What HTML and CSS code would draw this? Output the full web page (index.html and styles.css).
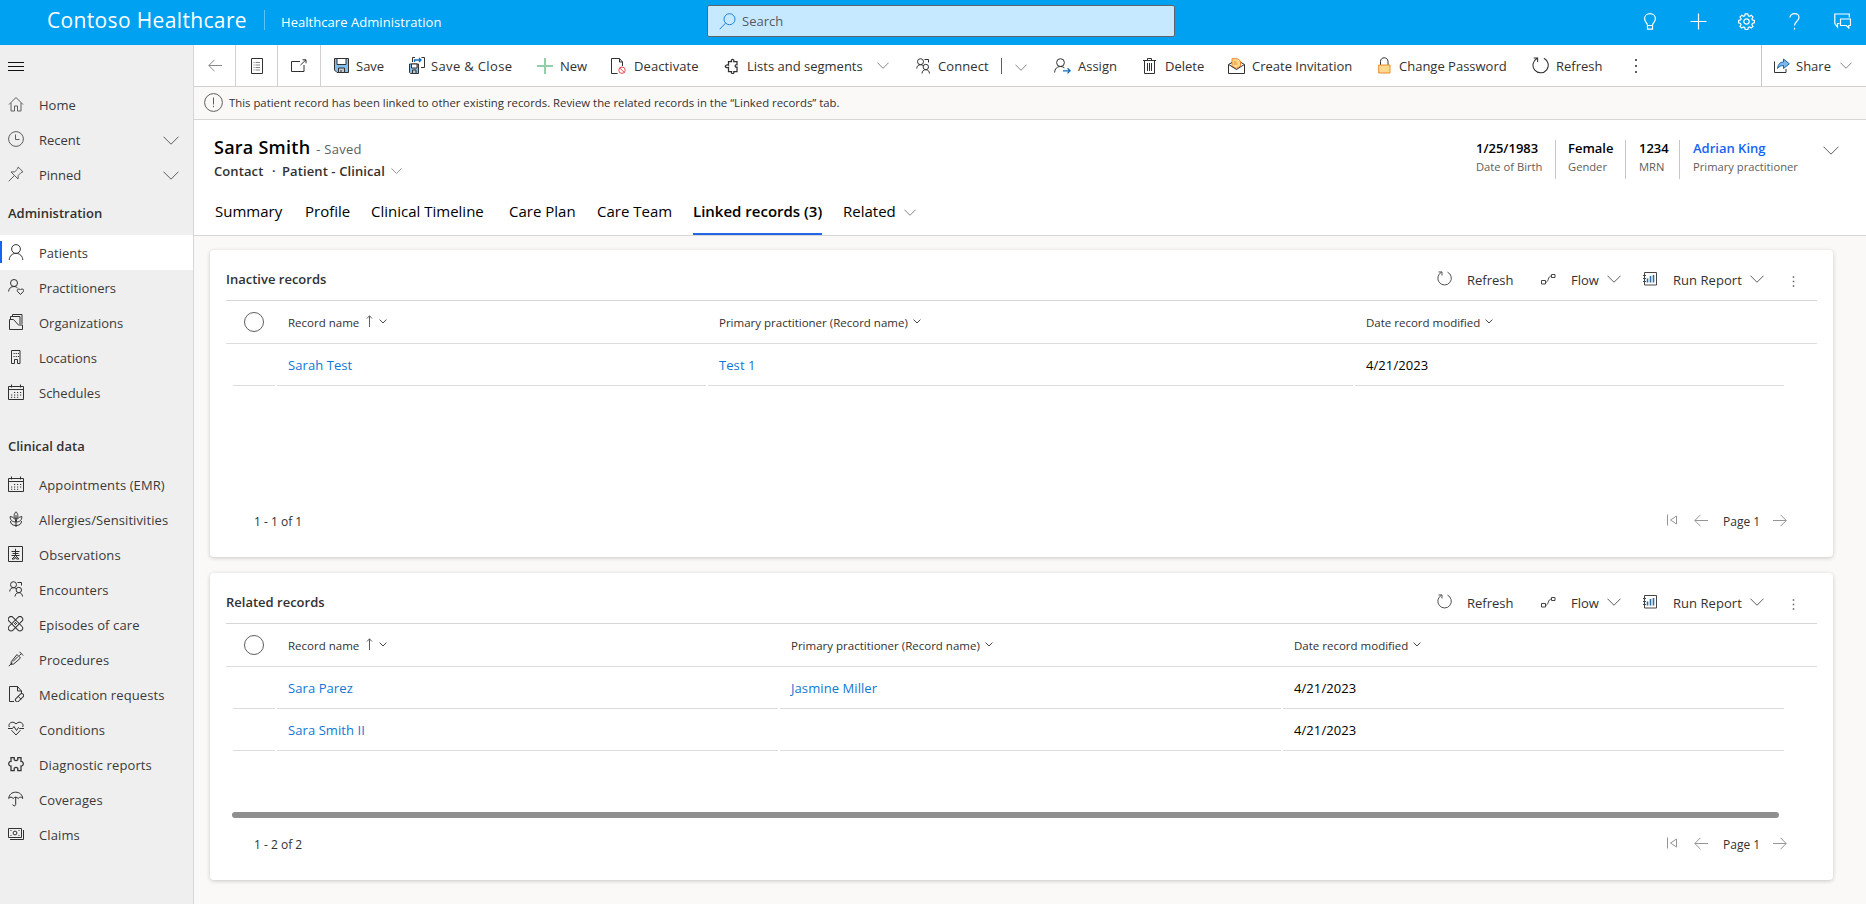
FILE: index.html
```
<!DOCTYPE html>
<html lang="en">
<head>
<meta charset="utf-8">
<title>Sara Smith - Contoso Healthcare</title>
<link rel="stylesheet" href="styles.css">
</head>
<body>
<svg class="sprite" aria-hidden="true">
  <symbol id="chev" viewBox="0 0 16 9"><path d="M.5.7 8 8.2 15.5.7"/></symbol>
  <symbol id="chev-s" viewBox="0 0 8 5"><path d="M.6.6 4 4 7.4.6"/></symbol>
  <symbol id="refresh" viewBox="0 0 16 16"><path d="M11.2 1.2a7.2 7.2 0 1 1-6.6.2M1.6 1h3.7v3.8"/></symbol>
  <symbol id="person" viewBox="0 0 16 16"><circle cx="8" cy="5" r="4.4"/><path d="M1.2 16c.2-4 3-6.600 6.800-6.600s6.600 2.600 6.800 6.600"/></symbol>
  <symbol id="people" viewBox="0 0 14 16"><circle cx="4.500" cy="3.700" r="3"/><path d="M.7 10.500c.2-2.400 1.600-3.800 3.800-3.800 1 0 1.800.3 2.400.8M8.500 1.500h4v3"/><circle cx="9.800" cy="9" r="2.700"/><path d="M6 15.500c.2-2.400 1.600-3.800 3.800-3.800s3.500 1.400 3.700 3.800"/></symbol>
  <symbol id="calendar" viewBox="0 0 16 16"><path d="M.5 2.500h15v13H.5zM.5 5.500h15M3.500.5v3M12.500.5v3"/><path d="M6 8.500h7.500M3 11h10.500M3 13.300h8" stroke-dasharray="1.200 1.800"/></symbol>
  <symbol id="puzzle" viewBox="0 0 14 16"><path d="M4.500 3.500h3c-1-2.800 3-2.800 2.300 0h3.200v3.200c-2.500-.6-2.500 3 0 2.400v4.400H9.800c.7 2.800-3 2.800-2.300 0h-3V9.300c-4 1.500-4.500-3.200 0-2.200z"/></symbol>
  <symbol id="dots" viewBox="0 0 4 16"><path d="M1 1h2v2H1zM1 7h2v2H1zM1 13h2v2H1z"/></symbol>
  <symbol id="flow" viewBox="0 0 15 12"><path d="M.5 7.500h4v3.500h-4zM10.500 1.500h3.500v3h-3.500zM4.500 9.300C8 9.300 6.500 3 10.500 3"/></symbol>
  <symbol id="report" viewBox="0 0 14 14"><path d="M1.500.5h12v12.500h-12z"/><path class="bar" d="M4.500 6.500v4M7.500 4v6.500M10.500 3v7.500"/><path d="M0 3.500h3M0 6.500h3M0 9.500h3"/></symbol>
  <symbol id="first" viewBox="0 0 11 12"><path d="M.5.500v11M9.500 2v8L3.500 6z"/></symbol>
  <symbol id="left" viewBox="0 0 14 13"><path d="M.8 6.500H14M6.500.8.8 6.500l5.700 5.700"/></symbol>
  <symbol id="right" viewBox="0 0 14 13"><path d="M0 6.500h13.200M7.500.8l5.700 5.700-5.700 5.700"/></symbol>
  <symbol id="up" viewBox="0 0 8 12"><path d="M3.500.8V12M1 3.500l2.500-2.700L6 3.500"/></symbol>
</svg>

<header class="topbar">
  <div class="brand">Contoso Healthcare</div>
  <div class="app-name">Healthcare Administration</div>
  <div class="search">
    <svg class="ic" width="17" height="17" viewBox="0 0 17 17"><circle cx="10.500" cy="6.200" r="5.500"/><path d="M6.500 10.200.7 16.200"/></svg>
    <span>Search</span>
  </div>
  <nav class="top-icons">
    <svg class="ic" width="12" height="17" viewBox="0 0 12 17"><path d="M3.500 12.500C3.500 9.500.6 9 .6 5.700.600 2.800 3 .7 6 .7s5.400 2.100 5.400 5c0 3.300-2.900 3.800-2.900 6.800zM3.500 12.500v3.700h5v-3.700"/></svg>
    <svg class="ic plus" width="17" height="17" viewBox="0 0 17 17"><path d="M8.500.5v16M.5 8.500h16"/></svg>
    <svg class="ic" width="17" height="17" viewBox="0 0 17 17"><circle cx="8.500" cy="8.500" r="2.700"/><path d="M7.200.8h2.600l.5 2 1.200.5 1.800-1.100 1.700 1.800-1.100 1.800.5 1.100 2 .500v2.500l-2 .500-.5 1.200 1.100 1.800-1.800 1.700-1.700-1.100-1.200.5-.500 2H7.200l-.5-2-1.200-.5-1.800 1.100L2 13.400l1.100-1.800-.5-1.200-2-.500V7.400l2-.500.5-1.100L2 4l1.800-1.800 1.700 1.100 1.200-.5z"/></svg>
    <svg class="ic" width="11" height="17" viewBox="0 0 11 17"><path d="M1 4.500C1 2 3 .7 5.400.7 8 .7 10 2.300 10 4.600c0 3.400-4.500 4-4.500 7.900M5.500 14.800v1.700"/></svg>
    <svg class="ic" width="17" height="16" viewBox="0 0 17 16"><path d="M5.500 10.500H3.500V14L.8 10.500V1h14.500v3.500M6.500 6h10v6.500h-1.700v2.500l-2.500-2.500H6.500z"/></svg>
  </nav>
</header>

<div class="shell">
  <aside class="side">
    <div class="burger"><i></i><i></i><i></i></div>
    <ul class="nav">
      <li><svg class="ic soft" viewBox="0 0 16 16"><path d="M1 8.500 8 1.500l7 7M3 7v8h3.500v-5h3v5H13V7"/></svg>Home</li>
      <li><svg class="ic soft" viewBox="0 0 16 16"><circle cx="8" cy="8" r="7.400"/><path d="M7.500 3.500v5h4"/></svg>Recent<svg class="ic more"><use href="#chev"/></svg></li>
      <li><svg class="ic soft" viewBox="0 0 16 16"><path d="M10.200 1 15 5.800l-2 .8-2.800 2.900-.2 3.500L3 6l3.700-.200L9.500 3zM6.500 9.500.7 15.300"/></svg>Pinned<svg class="ic more"><use href="#chev"/></svg></li>
    </ul>
    <h2 class="group">Administration</h2>
    <ul class="nav">
      <li class="on"><svg class="ic"><use href="#person"/></svg>Patients</li>
      <li><svg class="ic" viewBox="0 0 16 16"><circle cx="6" cy="4" r="3.500"/><path d="M.6 12.500c.2-3 2.200-5 5.400-5 1.600 0 2.600.5 3.600 1.500M12.500 15.500 9.400 12.300c-1-2 1.900-3.300 3.100-1.300 1.200-2 4-.7 3 1.300z"/></svg>Practitioners</li>
      <li><svg class="ic" viewBox="0 0 16 16"><path d="M2.500 5V2.500h9.500V10M4.500 2.500v-2h9.500V10M1.500 5.500h4l5 5.500h4v4.500h-13z"/></svg>Organizations</li>
      <li><svg class="ic" viewBox="0 0 16 16"><path d="M3.500 1.500h8.500v13H9.500v-4h-3v4h-3z"/><path d="M5.500 4.500H11M5.500 7.500H11" stroke-dasharray="1.200 1"/></svg>Locations</li>
      <li><svg class="ic"><use href="#calendar"/></svg>Schedules</li>
    </ul>
    <h2 class="group clinical">Clinical data</h2>
    <ul class="nav wide">
      <li><svg class="ic"><use href="#calendar"/></svg>Appointments (EMR)</li>
      <li><svg class="ic" viewBox="0 0 16 16"><path d="M8 .8c2.500 2.700 2.500 5 0 7.200C5.500 5.800 5.500 3.500 8 .8zM8 4v12M8 11C7.500 7.500 5 6 2.200 5.500 2 9 4 11 8 11c4 0 6-2 5.800-5.500C11 6 8.500 7.500 8 11M8 14.500C4.500 14.500 2.500 13 2.500 10M8 14.500c3.500 0 5.500-1.500 5.500-4.500"/></svg>Allergies/Sensitivities</li>
      <li><svg class="ic" viewBox="0 0 16 16"><path d="M.5.500h14v15H.5zM7.500 2.800v7M3.500 5.500h8M4.500 7.500h6M3.500 9.500h8M7.500 9.500 4 13h2.500l1-2 1 2H11z"/></svg>Observations</li>
      <li><svg class="ic"><use href="#people"/></svg>Encounters</li>
      <li><svg class="ic" viewBox="0 0 16 16"><rect x="-1.500" y="5" width="18" height="5.500" rx="2.700" transform="rotate(45 7.500 7.700)"/><rect x="-1.500" y="5" width="18" height="5.500" rx="2.700" transform="rotate(-45 7.500 7.700)"/><path d="M6 7.500h3.500M7.500 6v3.500" stroke-dasharray="1 1"/></svg>Episodes of care</li>
      <li><svg class="ic" viewBox="0 0 16 16"><path d="M.8 15.200l3.500-3.500M11.500.8l3.700 3.700M13.300 2.700l-2 2M9 3.500l3.500 3.500-6.800 6-2.700.3.300-2.700zM10 5.500l-5 5"/></svg>Procedures</li>
      <li><svg class="ic" viewBox="0 0 16 16"><path d="M6 15.500H1.500V.5h8l4 4.500v2M9.500.5V5h4"/><rect x="6.500" y="9.800" width="10" height="3.800" rx="1.900" transform="rotate(-45 11.500 11.700)"/><path d="m10 10.200 3 3"/></svg>Medication requests</li>
      <li><svg class="ic" viewBox="0 0 16 16"><path d="M1.300 6C-.5 2.500 4.500-1 8 3c3.500-4 8.500-.5 6.700 3M3.500 9.200 8 14l4.500-4.800M0 7.500h4.500L6 5.500l2.500 4 2-3 1 1H16"/></svg>Conditions</li>
      <li><svg class="ic bold" viewBox="0 0 16 16"><path d="M3 1.500h3.200v2.300c1.200 1 2.400 1 3.600 0V1.500H13v4c3-.5 3 5 0 4.500v4.500H9.800v-2.300c-1.200-1-2.400-1-3.600 0v2.300H3V10c-3 .5-3-5 0-4.500z"/></svg>Diagnostic reports</li>
      <li><svg class="ic" viewBox="0 0 16 16"><path d="M.7 7.500C1 3.500 4 1.200 7.700 1.200s6.700 2.300 7 6.300c-1.500-1.800-3-1.800-4.500 0-1.600-1.800-3.400-1.800-5 0-1.500-1.800-3-1.800-4.500 0zM7.700 6v7.500c0 1.800-2.900 1.800-2.900 0"/></svg>Coverages</li>
      <li><svg class="ic" viewBox="0 0 16 16"><path d="M.5 2.500h13v9H.5zM2 13.500h13.500V4"/><circle cx="7" cy="7" r="1.900"/><path d="M2.500 4.500h1M10.500 4.500h1M2.500 9.500h1M10.500 9.500h1"/></svg>Claims</li>
    </ul>
  </aside>

  <main class="main">
    <div class="commands">
      <div class="sq back"><svg class="ic" width="14" height="13"><use href="#left"/></svg></div>
      <div class="sq form"><svg class="ic" width="12" height="16" viewBox="0 0 12 16"><path d="M.5.5h11v15H.5z"/><path class="rule" d="M4.500 4.500H9M4.500 7H9M4.500 9.500H9M4.500 12H9M2.500 4.500h1M2.500 7h1M2.500 9.500h1M2.500 12h1"/></svg></div>
      <div class="sq pop"><svg class="ic" width="16" height="13" viewBox="0 0 16 13"><path d="M9 2.500H.5v10h12.500V6M9.500 6 15 .8M11.500.8H15v3.500"/></svg></div>
      <div class="cmd c-save"><svg class="ic" width="15" height="15" viewBox="0 0 15 15"><path class="blue" d="M.5.5h14v14H3L.5 12z"/><path class="paper" d="M3 .5h9v6H3z"/><path class="tab" d="M4.500 10h6v4.500h-6z"/><path d="M7 12v2"/></svg><span>Save</span></div>
      <div class="cmd c-saveclose"><svg class="ic" width="16" height="17" viewBox="0 0 16 17"><path class="blue" d="M.5 7h9v9.500h-8l-1-1z"/><path class="paper" d="M2.500 7h5.500v4H2.500z"/><path class="tab" d="M3.500 13h3.500v3.500H3.500z"/><path d="M3.500 5V.5h2.500M12.500.5h3v10h-3.500"/><path class="arrow" d="M5.500 5V3H12M10 1l2 2-2 2"/></svg><span>Save &amp; Close</span></div>
      <div class="cmd c-new"><svg class="ic green" width="16" height="16" viewBox="0 0 16 16"><path d="M8 0v16M0 8h16"/></svg><span>New</span></div>
      <div class="cmd c-deact"><svg class="ic" width="15" height="16" viewBox="0 0 15 16"><path d="M6.500 15.500h-6V.5h8l3 3.500v4M8.500.500V4h3"/><circle class="red" cx="11" cy="12.200" r="3.200"/><path class="red" d="m8.800 10 4.400 4.400"/></svg><span>Deactivate</span></div>
      <div class="cmd c-lists"><svg class="ic bold" width="14" height="16"><use href="#puzzle"/></svg><span>Lists and segments</span><svg class="ic chev" width="12" height="7"><use href="#chev"/></svg></div>
      <div class="cmd c-connect"><svg class="ic" width="14" height="16"><use href="#people"/></svg><span>Connect</span><b class="split"></b><svg class="ic chev low" width="12" height="7"><use href="#chev"/></svg></div>
      <div class="cmd c-assign"><svg class="ic" width="17" height="16" viewBox="0 0 17 16"><circle cx="6.500" cy="4.600" r="3.900"/><path d="M.600 14.500c.2-3.700 2.500-6 5.900-6 1.600 0 2.900.5 3.900 1.300"/><path class="arrow" d="M9 12.800h7M13.500 10.200l2.600 2.600-2.600 2.600"/></svg><span>Assign</span></div>
      <div class="cmd c-delete"><svg class="ic" width="13" height="16" viewBox="0 0 13 16"><path d="M0 2.500h13M4.500 2.500v-2h4v2M1.500 2.500v13h10v-13M4.500 5v8M6.500 5v8M8.500 5v8"/></svg><span>Delete</span></div>
      <div class="cmd c-invite"><svg class="ic" width="17" height="16" viewBox="0 0 17 16"><path class="gold" d="M4 8V.7h5.500L12.500 3v5L8 10.500z"/><path class="goldline" d="M5.500 4h3M5.500 6h4"/><path d="M4 4.500.5 6.500v9h16v-9L13 4.500M.7 6.500l7.800 5 7.800-5"/></svg><span>Create Invitation</span></div>
      <div class="cmd c-pass"><svg class="ic" width="13" height="17" viewBox="0 0 13 17"><path d="M2.500 8V4.500c0-5 7.500-5 7.500 0V8"/><path class="gold" d="M.7 8h11.300v8H.7z"/></svg><span>Change Password</span></div>
      <div class="cmd c-refresh"><svg class="ic" width="17" height="17"><use href="#refresh"/></svg><span>Refresh</span></div>
      <svg class="dots" width="4" height="16"><use href="#dots"/></svg>
      <div class="share"><svg class="ic" width="16" height="15" viewBox="0 0 16 15"><path d="M.5 3.500v11h11.500V11"/><path class="sharearrow" d="M3.500 10.500C4 6.500 6 4 9.500 4V1l5.800 4.800L9.500 10.500V7.500C7 7.500 5 8.500 3.500 10.500z"/></svg><span>Share</span><svg class="ic chev" width="12" height="7"><use href="#chev"/></svg></div>
    </div>

    <div class="notice"><svg class="ic" width="19" height="19" viewBox="0 0 19 19"><circle cx="9.500" cy="9.500" r="8.900"/><path d="M9.500 4.500v7M9.500 12.800v1.400"/></svg><span>This patient record has been linked to other existing records. Review the related records in the “Linked records” tab.</span></div>

    <section class="record">
      <div class="record-top">
        <div class="who">
          <h1>Sara Smith <small>- Saved</small></h1>
          <p><span class="w-contact">Contact</span><span class="w-dot">·</span><span>Patient - Clinical</span><svg class="ic chev" width="11" height="6"><use href="#chev"/></svg></p>
        </div>
        <dl class="facts">
          <div class="f1"><dt>1/25/1983</dt><dd>Date of Birth</dd></div>
          <div class="f2"><dt>Female</dt><dd>Gender</dd></div>
          <div class="f3"><dt>1234</dt><dd>MRN</dd></div>
          <div class="f4"><dt class="link">Adrian King</dt><dd>Primary practitioner</dd></div>
        </dl>
        <svg class="ic expand" width="16" height="9"><use href="#chev"/></svg>
      </div>
      <div class="tabs">
        <span class="t1">Summary</span><span class="t2">Profile</span><span class="t3">Clinical Timeline</span><span class="t4">Care Plan</span><span class="t5">Care Team</span><span class="t6 active">Linked records (3)</span><span class="t7">Related<svg class="ic chev" width="12" height="7"><use href="#chev"/></svg></span>
      </div>
    </section>

    <div class="content">
      <section class="card first">
        <div class="card-head">
          <h3>Inactive records</h3>
          <div class="tools">
            <svg class="ic g-refresh" width="15" height="15"><use href="#refresh"/></svg><span class="l-refresh">Refresh</span>
            <svg class="ic g-flow" width="15" height="12"><use href="#flow"/></svg><span class="l-flow">Flow</span><svg class="ic g-chev" width="14" height="8"><use href="#chev"/></svg>
            <svg class="ic g-report" width="14" height="14"><use href="#report"/></svg><span class="l-report">Run Report</span><svg class="ic g-chev" width="14" height="8"><use href="#chev"/></svg>
            <svg class="dots thin" width="3" height="13"><use href="#dots"/></svg>
          </div>
        </div>
        <div class="grid-row grid-head">
          <div><i class="circle"></i></div>
          <div>Record name<svg class="ic sort" width="8" height="12"><use href="#up"/></svg><svg class="ic tiny" width="8" height="5"><use href="#chev-s"/></svg></div>
          <div>Primary practitioner (Record name)<svg class="ic tiny" width="8" height="5"><use href="#chev-s"/></svg></div>
          <div>Date record modified<svg class="ic tiny" width="8" height="5"><use href="#chev-s"/></svg></div>
        </div>
        <div class="grid-body">
          <div class="grid-row"><div></div><div><a>Sarah Test</a></div><div><a>Test 1</a></div><div>4/21/2023</div></div>
        </div>
        <div class="pager">
          <span class="count">1 - 1 of 1</span>
          <svg class="ic p-first" width="11" height="12"><use href="#first"/></svg><svg class="ic p-left" width="14" height="13"><use href="#left"/></svg><span class="page">Page 1</span><svg class="ic p-right" width="14" height="13"><use href="#right"/></svg>
        </div>
      </section>

      <section class="card second">
        <div class="card-head">
          <h3>Related records</h3>
          <div class="tools">
            <svg class="ic g-refresh" width="15" height="15"><use href="#refresh"/></svg><span class="l-refresh">Refresh</span>
            <svg class="ic g-flow" width="15" height="12"><use href="#flow"/></svg><span class="l-flow">Flow</span><svg class="ic g-chev" width="14" height="8"><use href="#chev"/></svg>
            <svg class="ic g-report" width="14" height="14"><use href="#report"/></svg><span class="l-report">Run Report</span><svg class="ic g-chev" width="14" height="8"><use href="#chev"/></svg>
            <svg class="dots thin" width="3" height="13"><use href="#dots"/></svg>
          </div>
        </div>
        <div class="grid-row grid-head">
          <div><i class="circle"></i></div>
          <div>Record name<svg class="ic sort" width="8" height="12"><use href="#up"/></svg><svg class="ic tiny" width="8" height="5"><use href="#chev-s"/></svg></div>
          <div>Primary practitioner (Record name)<svg class="ic tiny" width="8" height="5"><use href="#chev-s"/></svg></div>
          <div>Date record modified<svg class="ic tiny" width="8" height="5"><use href="#chev-s"/></svg></div>
        </div>
        <div class="grid-body">
          <div class="grid-row"><div></div><div><a>Sara Parez</a></div><div><a>Jasmine Miller</a></div><div>4/21/2023</div></div>
          <div class="grid-row"><div></div><div><a>Sara Smith II</a></div><div></div><div>4/21/2023</div></div>
        </div>
        <div class="scroll"></div>
        <div class="pager">
          <span class="count">1 - 2 of 2</span>
          <svg class="ic p-first" width="11" height="12"><use href="#first"/></svg><svg class="ic p-left" width="14" height="13"><use href="#left"/></svg><span class="page">Page 1</span><svg class="ic p-right" width="14" height="13"><use href="#right"/></svg>
        </div>
      </section>
    </div>
  </main>
</div>
</body>
</html>
```
FILE: styles.css
```
* { box-sizing: border-box; }
body {
  margin: 0;
  width: 1866px;
  height: 904px;
  overflow: hidden;
  font: 13px/18px "Open Sans", "Noto Sans", sans-serif;
  color: #323130;
  background: #faf9f8;
}
h1, h2, h3, p, ul, dl, dd { margin: 0; padding: 0; }
ul { list-style: none; }
.sprite { display: none; }
.ic { fill: none; stroke: #323130; stroke-width: 1; flex: none; }
.ic.bold { stroke-width: 1.25; }
.ic.soft { stroke: #605e5c; }
.dots { fill: #605e5c; flex: none; }
.blue { fill: #83beec; }
.paper { fill: #fff; }
.tab { fill: #c8c6c4; }
.rule { stroke: #8a8886; }
.arrow { stroke: #0f6cbd; stroke-width: 1.3; }
.red { stroke: #e8474c; }
.gold { fill: #fcd98f; stroke: #f08a2c; }
.goldline { stroke: #f08a2c; }
.ic.green { stroke: #8fd0a9; stroke-width: 2; }
.sharearrow { fill: #7db9e8; stroke: #1b64a8; }
.bar { stroke: #2f6fa8; stroke-width: 1.6; }

.topbar { display: flex; align-items: center; height: 45px; background: #00a1f1; color: #fff; }
.brand { width: 217px; margin: -6px 0 0 47px; height: 26px; font-size: 21px; line-height: 26px; letter-spacing: .35px; white-space: nowrap; }
.app-name { width: 443px; height: 20px; margin-top: -5px; padding-left: 16px; line-height: 24px; letter-spacing: .05px; border-left: 1px solid #5cc4f7; white-space: nowrap; }
.search { display: flex; align-items: center; gap: 6px; width: 468px; height: 32px; margin-top: -3px; padding-left: 11px; border: 1px solid #5f6468; border-radius: 2px; background: #c7e9ff; color: #545b61; }
.search .ic { stroke: #1f7fd6; }
.top-icons { display: grid; grid-template-columns: repeat(5, 48px); width: 240px; margin: -3px 0 0 451px; justify-items: center; align-items: center; }
.top-icons .ic { stroke: #fff; stroke-width: 1.2; }

.shell { display: flex; height: 859px; }
.side { width: 194px; flex: none; background: #efefef; border-right: 1px solid #d6d6d6; }
.burger { height: 42px; padding: 17px 0 0 8px; }
.burger i { display: block; width: 16px; height: 1px; margin-bottom: 3px; background: #111; }
.nav li { display: flex; align-items: center; height: 35px; padding-left: 8px; color: #3b3a39; white-space: nowrap; }
.nav.wide { letter-spacing: .1px; }
.nav li > .ic:first-child { width: 16px; height: 16px; margin: -2px 15px 0 0; }
.nav .more { width: 16px; height: 9px; margin: 2px 14px 0 auto; stroke: #605e5c; }
.nav .on { background: linear-gradient(#1463f3, #1463f3) 0 6px / 2px 22px no-repeat #fff; }
.group { height: 43px; padding-left: 8px; font-size: 13px; line-height: 43px; font-weight: 600; }
.clinical { height: 57px; line-height: 72px; }

.main { flex: 1; min-width: 0; }
.commands { display: flex; align-items: center; height: 42px; background: #fff; border-bottom: 1px solid #d2d0ce; }
.sq { display: flex; align-items: center; justify-content: center; height: 41px; border-right: 1px solid #d2d0ce; }
.back { width: 42px; }
.back .ic { stroke: #8a8886; }
.form { width: 42px; }
.pop { width: 43px; }
.cmd { display: flex; align-items: center; white-space: nowrap; flex: none; }
.cmd span { margin-left: 7px; }
.ic.chev { stroke: #605e5c; }
.c-save { width: 88px; padding-left: 13px; }
.c-saveclose { width: 128px; letter-spacing: .35px; }
.c-saveclose span { margin-left: 6px; }
.c-new { width: 74px; }
.c-deact { width: 113px; letter-spacing: .1px; }
.c-deact span { margin-left: 8px; }
.c-lists { width: 192px; }
.c-lists span { margin-left: 9px; }
.c-lists .chev { margin-left: auto; margin-right: 27px; }
.c-connect { width: 138px; letter-spacing: .1px; }
.c-connect span { margin-left: 8px; }
.c-connect .split { width: 1px; height: 16px; margin-left: 12px; background: #605e5c; }
.c-connect .low { margin: 3px 0 0 13px; }
.c-assign { width: 89px; }
.c-delete { width: 85px; }
.c-delete span { margin-left: 9px; }
.c-invite { width: 150px; }
.c-pass { width: 154px; }
.c-pass span { margin-left: 8px; }
.c-refresh { width: 102px; }
.share { display: flex; align-items: center; height: 41px; margin-left: auto; width: 105px; padding-left: 12px; border-left: 1px solid #c8c6c4; }
.share span { margin-left: 6px; width: 44px; }

.notice { display: flex; align-items: center; height: 33px; padding: 0 0 1px 10px; gap: 6px; border-bottom: 1px solid #d6d6d6; font-size: 11.35px; white-space: nowrap; }
.notice .ic { stroke: #605e5c; }
.record { height: 116px; background: #fff; border-bottom: 1px solid #d6d6d6; }
.record-top { display: flex; height: 70px; padding-left: 20px; }
.who { flex: 1; padding-top: 15px; white-space: nowrap; }
.who h1 { font-size: 18px; line-height: 24px; font-weight: 600; letter-spacing: .25px; color: #000; }
.who small { margin-left: 1px; font-size: 13px; font-weight: 400; color: #605e5c; }
.who p { display: flex; align-items: center; font-weight: 600; height: 18px; margin-top: 1px; letter-spacing: .1px; }
.w-contact { width: 58px; }
.w-dot { width: 10px; }
.who .chev { margin-left: 6px; }
.facts { display: flex; padding-top: 20px; }
.facts div { height: 39px; border-right: 1px solid #c8c6c4; margin-right: 13px; white-space: nowrap; }
.facts dt { font-weight: 600; line-height: 17px; color: #000; }
.facts dd { font-size: 11.2px; line-height: 20px; color: #605e5c; }
.facts .f1 { width: 80px; margin-right: 12px; }
.facts .f2 { width: 58px; }
.facts .f3 { width: 41px; }
.facts .f4 { width: 130px; margin: 0; border: 0; }
.facts dt.link { color: #1464f4; }
.expand { margin: 26px 27px 0 0; stroke: #605e5c; }
.tabs { display: flex; height: 45px; padding-left: 21px; font-size: 15px; line-height: 43px; color: #000; white-space: nowrap; }
.t1 { width: 90px; } .t2 { width: 66px; } .t3 { width: 138px; } .t4 { width: 88px; } .t5 { width: 96px; }
.t6 { width: 129px; margin-right: 21px; }
.t7 .chev { margin-left: 8px; vertical-align: 1px; }
.tabs .active { font-weight: 600; border-bottom: 2px solid #2266e3; }

.content { padding: 14px 0 0 16px; }
.card { width: 1623px; height: 307px; margin-bottom: 16px; padding: 0 16px; background: #fff; border-radius: 4px; box-shadow: 0 1px 4px rgba(0, 0, 0, .2); display: flex; flex-direction: column; }
.card-head { display: flex; height: 51px; align-items: center; padding-top: 9px; border-bottom: 1px solid #d6d6d6; }
.card-head h3 { flex: 1; margin-top: -2px; font-size: 13px; font-weight: 600; }
.tools { display: flex; align-items: center; width: 380px; white-space: nowrap; }
.tools .ic { margin-top: -2px; stroke: #484644; stroke-width: 1; }
.g-refresh { margin-right: 15px; }
.l-refresh { width: 74px; }
.g-flow { margin-right: 15px; }
.l-flow { width: 36px; }
.g-report { margin: 0 16px 0 22px; }
.l-report { width: 77px; letter-spacing: .05px; }
.tools .thin { margin: 3px 0 0 28px; }
.grid-row { display: grid; column-gap: 2px; margin: 0 33px 0 7px; }
.first .grid-row { grid-template-columns: 42px 429px 645px 1fr; }
.second .grid-row { grid-template-columns: 42px 501px 501px 1fr; }
.grid-row > div { display: flex; align-items: center; height: 42px; padding-left: 11px; border-bottom: 1px solid #dddddd; color: #000; letter-spacing: .08px; }
.grid-row a { color: #0f78d4; }
.grid-row.grid-head { margin: 0; padding: 0 33px 0 7px; border-bottom: 1px solid #dddddd; font-size: 11.5px; font-weight: 500; }
.grid-head > div { border: 0; padding-top: 1px; color: #323130; letter-spacing: 0; }
.circle { width: 20px; height: 20px; margin-top: -1px; border: 1px solid #605e5c; border-radius: 50%; }
.ic.sort { margin: -3px 0 0 7px; stroke: #605e5c; }
.ic.tiny { margin: -3px 0 0 5px; stroke: #484644; }
.scroll { height: 6px; margin: 61px 38px 0 6px; border-radius: 3px; background: #8f8f8f; }
.pager { display: flex; align-items: center; height: 36px; margin: auto 30px 17px 28px; font-size: 12px; }
.count { flex: 1; }
.pager .ic { margin-top: -4px; stroke: #979593; stroke-width: 1; }
.p-first { margin-right: 16px; }
.page { width: 50px; margin-left: 15px; }
```
